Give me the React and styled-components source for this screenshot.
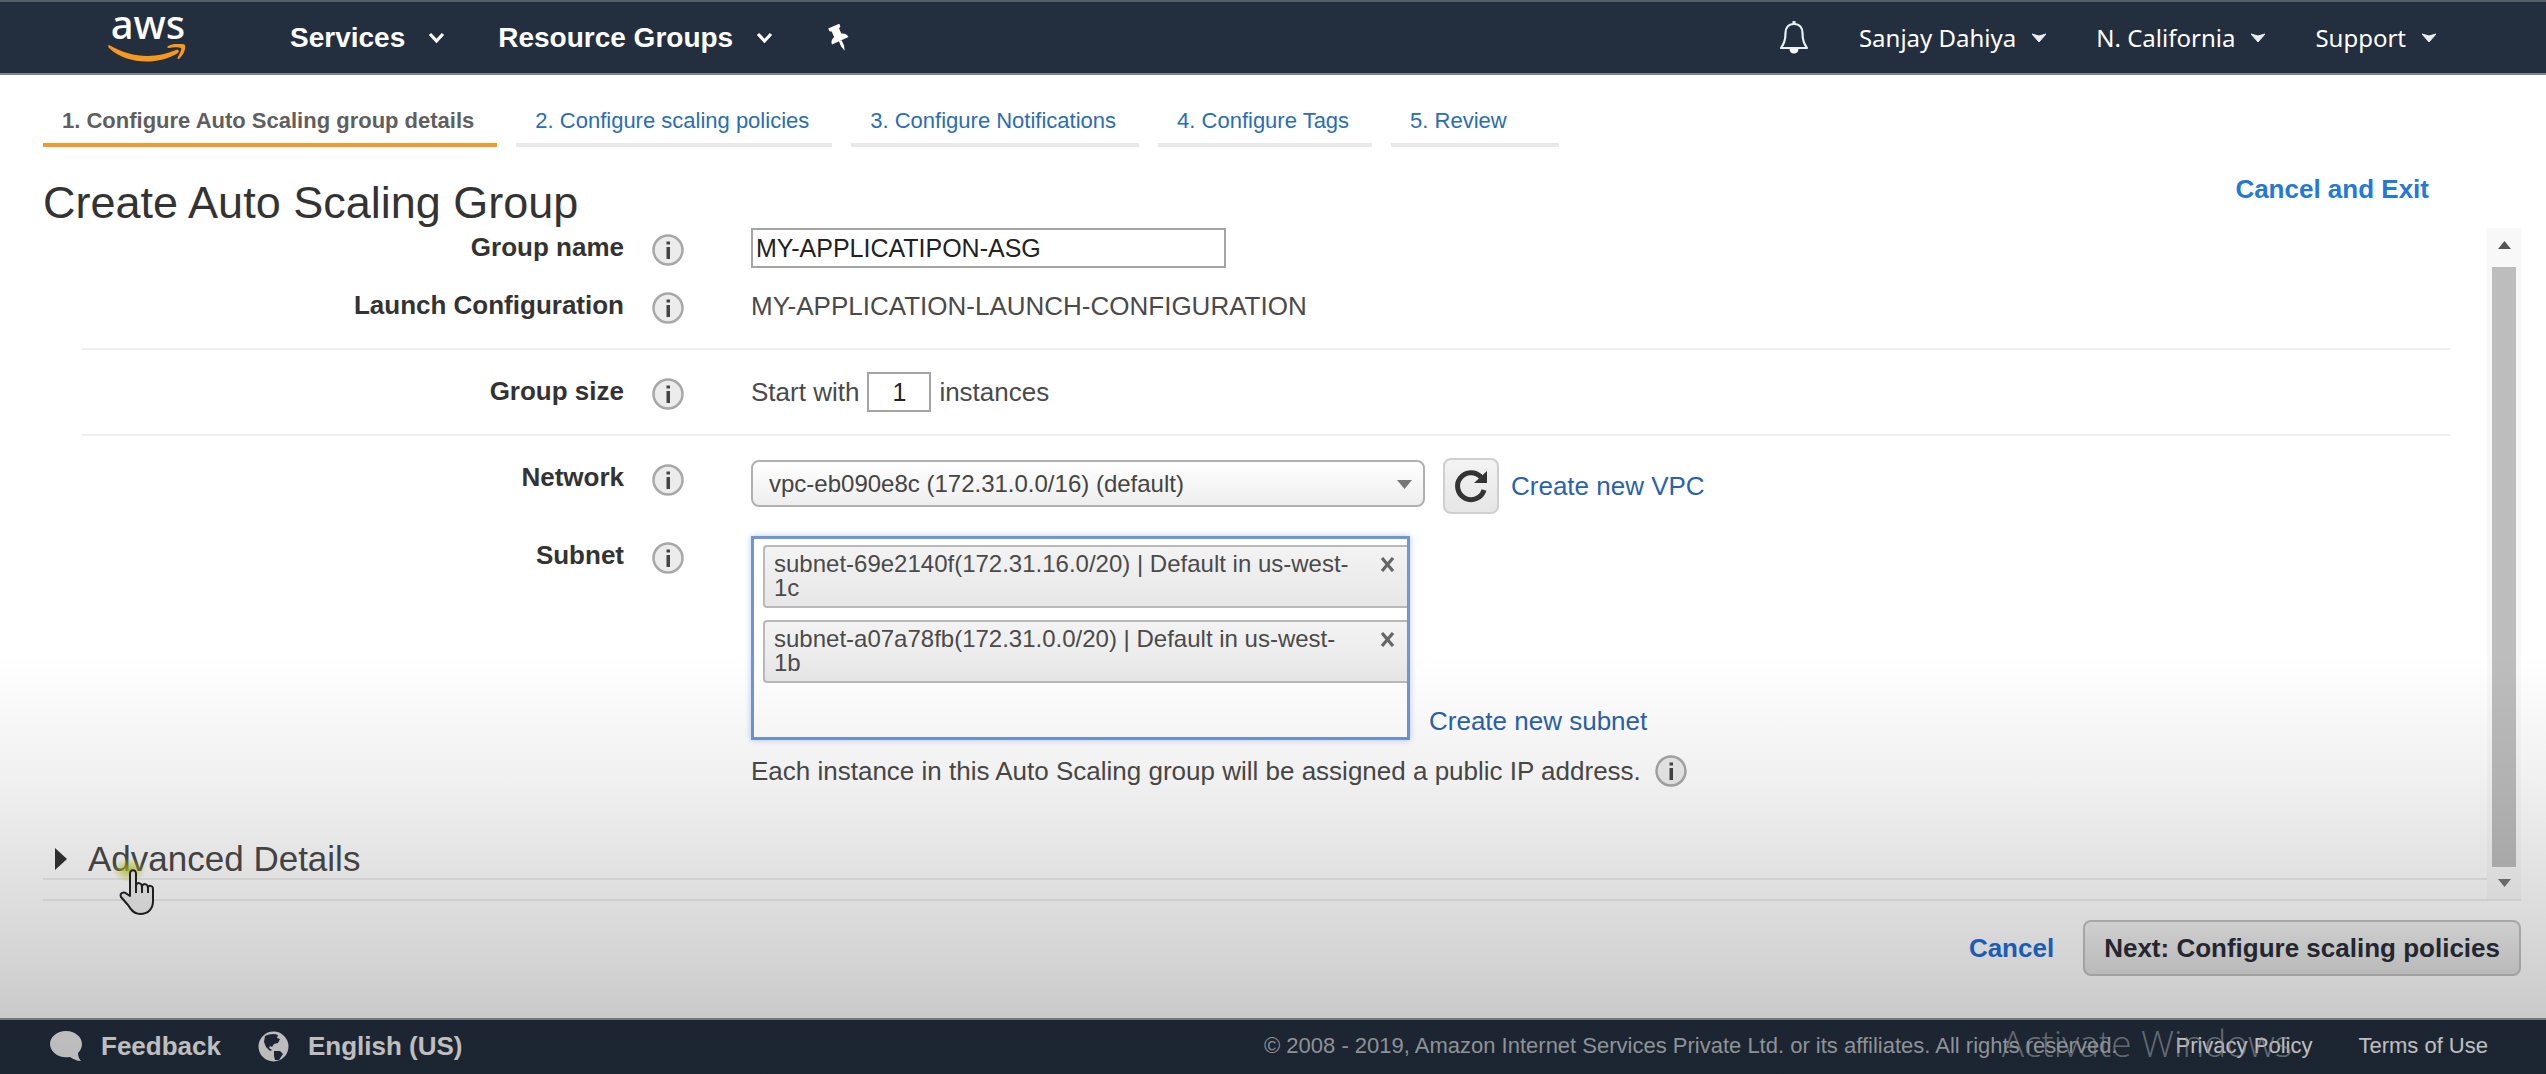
import React, { useState } from "react";
import styled, { createGlobalStyle } from "styled-components";

const sans = '"Liberation Sans", Arial, Helvetica, sans-serif';

const GlobalStyle = createGlobalStyle`
  *, *::before, *::after { box-sizing: border-box; }
  body { margin: 0; background: #fff; color: #4a4a4a; font: 26px/30px ${sans}; }
  button, input, select { font: inherit; color: inherit; margin: 0; }
  a { color: #2a62ac; text-decoration: none; }
  svg { display: block; flex: none; }
`;

const Page = styled.div`
  position: relative;
  display: flex;
  flex-direction: column;
  min-height: 100vh;
`;

const Scrim = styled.div`
  position: absolute;
  inset: auto 0 0 0;
  height: 39%;
  pointer-events: none;
  background: linear-gradient(to bottom, rgba(0, 0, 0, 0), rgba(0, 0, 0, 0.06) 30%, rgba(0, 0, 0, 0.14) 62%, rgba(0, 0, 0, 0.21) 88%, rgba(0, 0, 0, 0.22));
`;

const Header = styled.header`
  display: flex;
  align-items: center;
  height: 75px;
  padding: 0 110px 0 108px;
  background: #232f3e;
  border-top: 2px solid #555e68;
  border-bottom: 2px solid #7c848d;
  color: #fff;
`;

const Logo = styled.a`
  display: flex;
  flex-direction: column;
  align-items: center;
  gap: 7px;
  width: 80px;
  margin-right: 102px;
  color: #fff;
  font: 500 40px/26px "Noto Sans", sans-serif;
`;

const NavButton = styled.button`
  display: flex;
  align-items: center;
  gap: ${(p) => (p.$main ? 23 : 16)}px;
  padding: 0;
  margin-right: ${(p) => (p.$main ? 53 : 0)}px;
  border: 0;
  background: none;
  white-space: nowrap;
  font: ${(p) => (p.$main ? `bold 28px/34px ${sans}` : '24px/34px "Noto Sans", sans-serif')};
`;

const Account = styled.nav`
  display: flex;
  align-items: center;
  gap: 50px;
  margin-left: auto;
`;

const Steps = styled.nav`
  display: flex;
  gap: 19px;
  padding: 24px 43px 0;
`;

const Step = styled.a`
  min-width: 168px;
  padding: 7px 23px 7px 19px;
  border-bottom: 4px solid ${(p) => (p.$current ? "#f29a2e" : "#e9e9e9")};
  color: ${(p) => (p.$current ? "#5f5f5f" : "#2a6db5")};
  font-size: 22px;
  font-weight: ${(p) => (p.$current ? "bold" : "normal")};
`;

const TitleRow = styled.div`
  display: flex;
  justify-content: space-between;
  align-items: flex-start;
  height: 81px;
  padding: 27px 117px 0 43px;
`;

const Title = styled.h1`
  margin: 0;
  padding-top: 4px;
  color: #333;
  font-weight: normal;
  font-size: 45px;
  line-height: 50px;
`;

const StrongLink = styled.a`
  color: ${(p) => (p.$bright ? "#2478d8" : "#1f6fd6")};
  font-weight: bold;
`;

const Body = styled.main`
  display: flex;
  flex: 1;
  margin: 0 25px 0 43px;
  border-bottom: 2px solid #ededed;
`;

const Content = styled.form`
  display: flex;
  flex-direction: column;
  flex: 1;
`;

const Group = styled.section`
  display: flex;
  flex-direction: column;
  gap: ${(p) => p.$gap || 18}px;
  margin: 0 36px 0 39px;
  padding-bottom: 22px;
  & + & { padding-top: 22px; border-top: 2px solid #efefef; }
`;

const Field = styled.div`
  display: grid;
  grid-template-columns: 542px 32px 1fr;
  column-gap: 28px;
  align-items: start;
`;

const FieldLabel = styled.label`
  padding: 4px 0;
  color: #333;
  font-weight: bold;
  text-align: right;
`;

const InfoButton = styled.button`
  display: flex;
  padding: 0;
  margin: ${(p) => (p.$inline ? 0 : "6px 0 0")};
  border: 0;
  background: none;
`;

const Value = styled.div`
  display: flex;
  align-items: ${(p) => p.$align || "center"};
  gap: ${(p) => p.$gap || 8}px;
  min-height: 40px;
  padding-left: 39px;
`;

const TextInput = styled.input`
  width: ${(p) => (p.$small ? 64 : 475)}px;
  height: 40px;
  padding: 0 3px;
  border: 2px solid #a5a5a8;
  background: #fff;
  color: #222;
  font-size: 25px;
  text-align: ${(p) => (p.$small ? "center" : "left")};
`;

const SelectWrap = styled.div`
  position: relative;
  align-self: flex-start;
  width: 674px;
  margin: 2px 10px 0 0;
  svg { position: absolute; right: 13px; top: 20px; pointer-events: none; }
`;

const Select = styled.select`
  display: block;
  appearance: none;
  width: 100%;
  height: 47px;
  padding: 0 40px 0 16px;
  border: 2px solid #b0b0b0;
  border-radius: 8px;
  background: linear-gradient(#fff, #eee);
  color: #444;
  font-size: 24px;
`;

const IconButton = styled.button`
  display: grid;
  place-items: center;
  width: 56px;
  height: 56px;
  margin-right: 4px;
  padding: 0;
  border: 2px solid #cfcfcf;
  border-radius: 8px;
  background: linear-gradient(#f3f3f3, #e6e6e6);
  color: #333;
`;

const TokenBox = styled.ul`
  display: flex;
  flex-direction: column;
  gap: 12px;
  width: 659px;
  height: 204px;
  margin: 0;
  padding: 6px 0 0 9px;
  border: 3px solid #6e97d2;
  background: #fff;
  box-shadow: 0 0 6px rgba(90, 130, 220, 0.45);
  list-style: none;
`;

const Token = styled.li`
  display: flex;
  align-items: flex-start;
  justify-content: space-between;
  padding: 5px 9px 6px;
  border: 2px solid #b9b9b9;
  border-right: 0;
  border-radius: 4px 0 0 4px;
  background: linear-gradient(#f3f3f3, #e7e7e7);
  font-size: 24px;
  line-height: 24px;
`;

const TokenText = styled.span`
  width: 580px;
`;

const RemoveButton = styled.button`
  display: flex;
  padding: 5px 3px;
  border: 0;
  background: none;
  color: #666;
`;

const SubnetLink = styled.a`
  padding-bottom: 4px;
`;

const Note = styled.p`
  display: flex;
  align-items: center;
  gap: 14px;
  margin: -7px 0 0;
  padding-left: 669px;
`;

const Advanced = styled.button`
  display: flex;
  align-items: center;
  gap: 21px;
  margin: 31px 0 10px;
  padding: 0 0 0 12px;
  border: 0;
  border-bottom: 2px solid #ededed;
  background: none;
  text-align: left;
  font-size: 35px;
  line-height: 38px;
`;

const ScrollBar = styled.div`
  display: flex;
  flex-direction: column;
  width: 34px;
  padding: 0 5px;
  background: #f8f8f8;
`;

const ScrollArrow = styled.button`
  display: grid;
  place-items: center;
  height: ${(p) => (p.$down ? 32 : 39)}px;
  padding: ${(p) => (p.$down ? 0 : "0 0 5px")};
  border: 0;
  background: none;
`;

const ScrollThumb = styled.div`
  flex: 1;
  background: #bdbdbd;
`;

const Actions = styled.div`
  display: flex;
  align-items: center;
  justify-content: flex-end;
  gap: 29px;
  height: 117px;
  padding: 0 25px 23px;
`;

const NextButton = styled.button`
  height: 56px;
  padding: 0 19px;
  border: 2px solid #c3c3c3;
  border-radius: 8px;
  background: linear-gradient(#f2f2f2, #e2e2e2);
  color: #2b2e38;
  font-weight: bold;
`;

const Footer = styled.footer`
  position: relative;
  display: flex;
  align-items: center;
  height: 56px;
  padding: 0 58px 2px 50px;
  border-top: 2px solid #8f979f;
  background: #232f3e;
  font-size: 22px;
  line-height: 26px;
`;

const FooterLink = styled.a`
  display: flex;
  align-items: center;
  gap: 19px;
  margin-right: ${(p) => (p.$icon ? 37 : 0)}px;
  margin-left: ${(p) => (p.$icon ? 0 : 46)}px;
  color: #f2f2f2;
  font-size: ${(p) => (p.$icon ? 26 : 22)}px;
  font-weight: ${(p) => (p.$icon ? "bold" : "normal")};
`;

const Copyright = styled.span`
  margin-left: auto;
  margin-right: 12px;
  color: #b4babf;
`;

const Watermark = styled.span`
  position: absolute;
  right: 254px;
  top: 3px;
  color: rgba(190, 195, 200, 0.6);
  font: 300 37px/40px "Open Sans", "Noto Sans", sans-serif;
  pointer-events: none;
`;

const AdvancedLabel = styled.span`
  position: relative;
`;

const Pointer = styled.span`
  position: absolute;
  left: 31px;
  top: 13px;
  &::before {
    content: "";
    position: absolute;
    left: -7px;
    top: 5px;
    width: 34px;
    height: 24px;
    background: radial-gradient(closest-side, rgba(190, 200, 20, 0.8), rgba(220, 220, 60, 0));
  }
  svg { position: relative; margin-top: 16px; }
`;

const Smile = () => (
  <svg width="80" height="20" viewBox="0 0 80 20">
    <path d="M1 1c22 13 46 14 67 5 2-1 4 1 2 3C49 22 18 20 1 4c-1-1-1-3 0-3z" fill="#f7981f" />
    <path d="M60 2c6-3 15-3 17-1 1 3-1 10-6 14-1 0-2 0-1-2 2-4 4-8 3-9-2-1-8-1-12 0-2 0-2-1-1-2z" fill="#f7981f" />
  </svg>
);
const Chevron = () => (
  <svg width="17" height="12" viewBox="0 0 17 12">
    <path d="M2 2l6.500 7L15 2" fill="none" stroke="#fff" strokeWidth="3.200" />
  </svg>
);
const Caret = () => (
  <svg width="14" height="10" viewBox="0 0 14 10">
    <path d="M0 1l7 2 7-2-7 8z" fill="#e9eef2" stroke="#e9eef2" />
  </svg>
);
const Pin = () => (
  <svg width="26" height="28" viewBox="0 0 26 28">
    <g transform="rotate(-24 13 14)" fill="#fff">
      <path d="M7 1h12v3l-2 1v6c3 1 5 3 5 6H4c0-3 2-5 5-6V5L7 4z" />
      <path d="M11.500 17h3v6L13 28l-1.500-5z" />
    </g>
  </svg>
);
const Bell = () => (
  <svg width="30" height="34" viewBox="0 0 30 34" fill="none" stroke="#e8f0f7" strokeWidth="2.200">
    <path d="M15 3c-6 0-8.500 4-8.500 9 0 8-2 11-4.500 15h26c-2.500-4-4.500-7-4.500-15 0-5-2.500-9-8.500-9z" strokeLinejoin="round" />
    <path d="M15 0v4" strokeWidth="3" />
    <path d="M10.500 28h9c0 6-9 6-9 0z" fill="#fff" stroke="none" />
  </svg>
);
const InfoIcon = () => (
  <svg width="32" height="32" viewBox="0 0 32 32">
    <circle cx="16" cy="16" r="14.500" fill="#ececec" stroke="#a8a8a8" strokeWidth="2.500" />
    <path d="M14.500 7.500h3.500v3h-3.500zM14.500 13h3.500v12h-3.500z" fill="#444" />
  </svg>
);
const Refresh = () => (
  <svg width="36" height="36" viewBox="0 0 36 36">
    <path d="M31 22A13.500 13.500 0 1 1 28 9" fill="none" stroke="#333" strokeWidth="5" />
    <path d="M34 3v12H21z" fill="#333" />
  </svg>
);
const Cross = () => (
  <svg width="15" height="15" viewBox="0 0 15 15">
    <path d="M2 1l11 13M13 1L2 14" stroke="currentColor" strokeWidth="3.200" />
  </svg>
);
const Triangle = ({ dir, w, h, color }) => (
  <svg width={w} height={h} viewBox="0 0 10 10" preserveAspectRatio="none">
    <path d={{ up: "M5 0l5 10H0z", down: "M0 0h10L5 10z", right: "M0 0l10 5L0 10z" }[dir]} fill={color} />
  </svg>
);
const Bubble = () => (
  <svg width="32" height="32" viewBox="0 0 32 32">
    <path d="M16 1c9 0 16 6 16 13 0 4-2 7-4 9 0 3 1 6 3 8-4 0-8-2-11-4C9 29 0 22 0 14 0 7 7 1 16 1z" fill="#f0f0f0" />
  </svg>
);
const Globe = () => (
  <svg width="31" height="31" viewBox="0 0 31 31">
    <circle cx="15.500" cy="15.500" r="15" fill="#f0f0f0" />
    <path d="M7 5c4-2 9-3 13-1l-1 3 3 1-2 4-4 1-2 3-2-1-1 2 3 2-2 1-4-4-2-5z" fill="#232f3e" />
    <path d="M16 20l6 0 3 3-4 6-4 0-1-4z" fill="#232f3e" />
  </svg>
);
const Hand = () => (
  <svg width="36" height="46" viewBox="0 0 36 46">
    <path d="M11 27V5c0-5 6-5 6 0v12c0-4 6-4 6 1 0-4 6-4 6 1 0-3 5-3 5 1v12c0 8-5 13-13 13-6 0-9-4-12-9L2 28c-2-4 3-6 6-3z" fill="#efefef" stroke="#222" strokeWidth="2" strokeLinejoin="round" />
    <path d="M17 17v7M23 18v6M29 19v5" stroke="#222" strokeWidth="2" />
  </svg>
);

const Info = ({ inline }) => (
  <InfoButton type="button" aria-label="More information" $inline={inline}>
    <InfoIcon />
  </InfoButton>
);

const steps = ["Configure Auto Scaling group details", "Configure scaling policies", "Configure Notifications", "Configure Tags", "Review"];
const initialSubnets = [
  "subnet-69e2140f(172.31.16.0/20) | Default in us-west-1c",
  "subnet-a07a78fb(172.31.0.0/20) | Default in us-west-1b",
];

/* Allows a line break after the last hyphen of a subnet's zone name. */
const splitZone = (text) => {
  const at = text.lastIndexOf("-") + 1;
  return [text.slice(0, at), text.slice(at)];
};

export default function App() {
  const [subnets, setSubnets] = useState(initialSubnets);
  return (
    <Page>
      <GlobalStyle />
      <Header>
        <Logo href="#">
          aws
          <Smile />
        </Logo>
        <NavButton $main>Services <Chevron /></NavButton>
        <NavButton $main>Resource Groups <Chevron /></NavButton>
        <NavButton aria-label="Pin shortcuts"><Pin /></NavButton>
        <Account>
          <NavButton aria-label="Notifications"><Bell /></NavButton>
          {["Sanjay Dahiya", "N. California", "Support"].map((name) => (
            <NavButton key={name}>{name} <Caret /></NavButton>
          ))}
        </Account>
      </Header>

      <Steps>
        {steps.map((name, i) => (
          <Step key={name} href="#" $current={i === 0}>{`${i + 1}. ${name}`}</Step>
        ))}
      </Steps>

      <TitleRow>
        <Title>Create Auto Scaling Group</Title>
        <StrongLink href="#" $bright>Cancel and Exit</StrongLink>
      </TitleRow>

      <Body>
        <Content onSubmit={(e) => e.preventDefault()}>
          <Group>
            <Field>
              <FieldLabel htmlFor="name">Group name</FieldLabel>
              <Info />
              <Value><TextInput id="name" defaultValue="MY-APPLICATIPON-ASG" /></Value>
            </Field>
            <Field>
              <FieldLabel as="span">Launch Configuration</FieldLabel>
              <Info />
              <Value>MY-APPLICATION-LAUNCH-CONFIGURATION</Value>
            </Field>
          </Group>
          <Group>
            <Field>
              <FieldLabel htmlFor="size">Group size</FieldLabel>
              <Info />
              <Value>Start with <TextInput id="size" $small defaultValue="1" /> instances</Value>
            </Field>
          </Group>
          <Group $gap={22}>
            <Field>
              <FieldLabel htmlFor="network">Network</FieldLabel>
              <Info />
              <Value>
                <SelectWrap>
                  <Select id="network"><option>vpc-eb090e8c (172.31.0.0/16) (default)</option></Select>
                  <Triangle dir="down" w={15} h={9} color="#777" />
                </SelectWrap>
                <IconButton type="button" aria-label="Refresh"><Refresh /></IconButton>
                <a href="#">Create new VPC</a>
              </Value>
            </Field>
            <Field>
              <FieldLabel as="span" id="subnet">Subnet</FieldLabel>
              <Info />
              <Value $align="flex-end" $gap={19}>
                <TokenBox aria-labelledby="subnet">
                  {subnets.map((s) => (
                    <Token key={s}>
                      <TokenText>{splitZone(s)[0]}<wbr />{splitZone(s)[1]}</TokenText>
                      <RemoveButton type="button" aria-label="Remove" onClick={() => setSubnets(subnets.filter((x) => x !== s))}>
                        <Cross />
                      </RemoveButton>
                    </Token>
                  ))}
                </TokenBox>
                <SubnetLink href="#">Create new subnet</SubnetLink>
              </Value>
            </Field>
            <Note>Each instance in this Auto Scaling group will be assigned a public IP address. <Info inline /></Note>
          </Group>
          <Advanced type="button">
            <Triangle dir="right" w={12} h={22} color="#333" />
            <AdvancedLabel>
              Advanced Details
              <Pointer><Hand /></Pointer>
            </AdvancedLabel>
          </Advanced>
        </Content>
        <ScrollBar>
          <ScrollArrow aria-label="Scroll up"><Triangle dir="up" w={13} h={8} color="#555" /></ScrollArrow>
          <ScrollThumb />
          <ScrollArrow aria-label="Scroll down" $down><Triangle dir="down" w={13} h={8} color="#777" /></ScrollArrow>
        </ScrollBar>
      </Body>

      <Actions>
        <StrongLink href="#">Cancel</StrongLink>
        <NextButton>Next: Configure scaling policies</NextButton>
      </Actions>

      <Footer>
        <FooterLink href="#" $icon><Bubble /> Feedback</FooterLink>
        <FooterLink href="#" $icon><Globe /> English (US)</FooterLink>
        <Copyright>© 2008 - 2019, Amazon Internet Services Private Ltd. or its affiliates. All rights reserved.</Copyright>
        <FooterLink href="#">Privacy Policy</FooterLink>
        <FooterLink href="#">Terms of Use</FooterLink>
        <Watermark>Activate Windows</Watermark>
      </Footer>
      <Scrim />
    </Page>
  );
}
